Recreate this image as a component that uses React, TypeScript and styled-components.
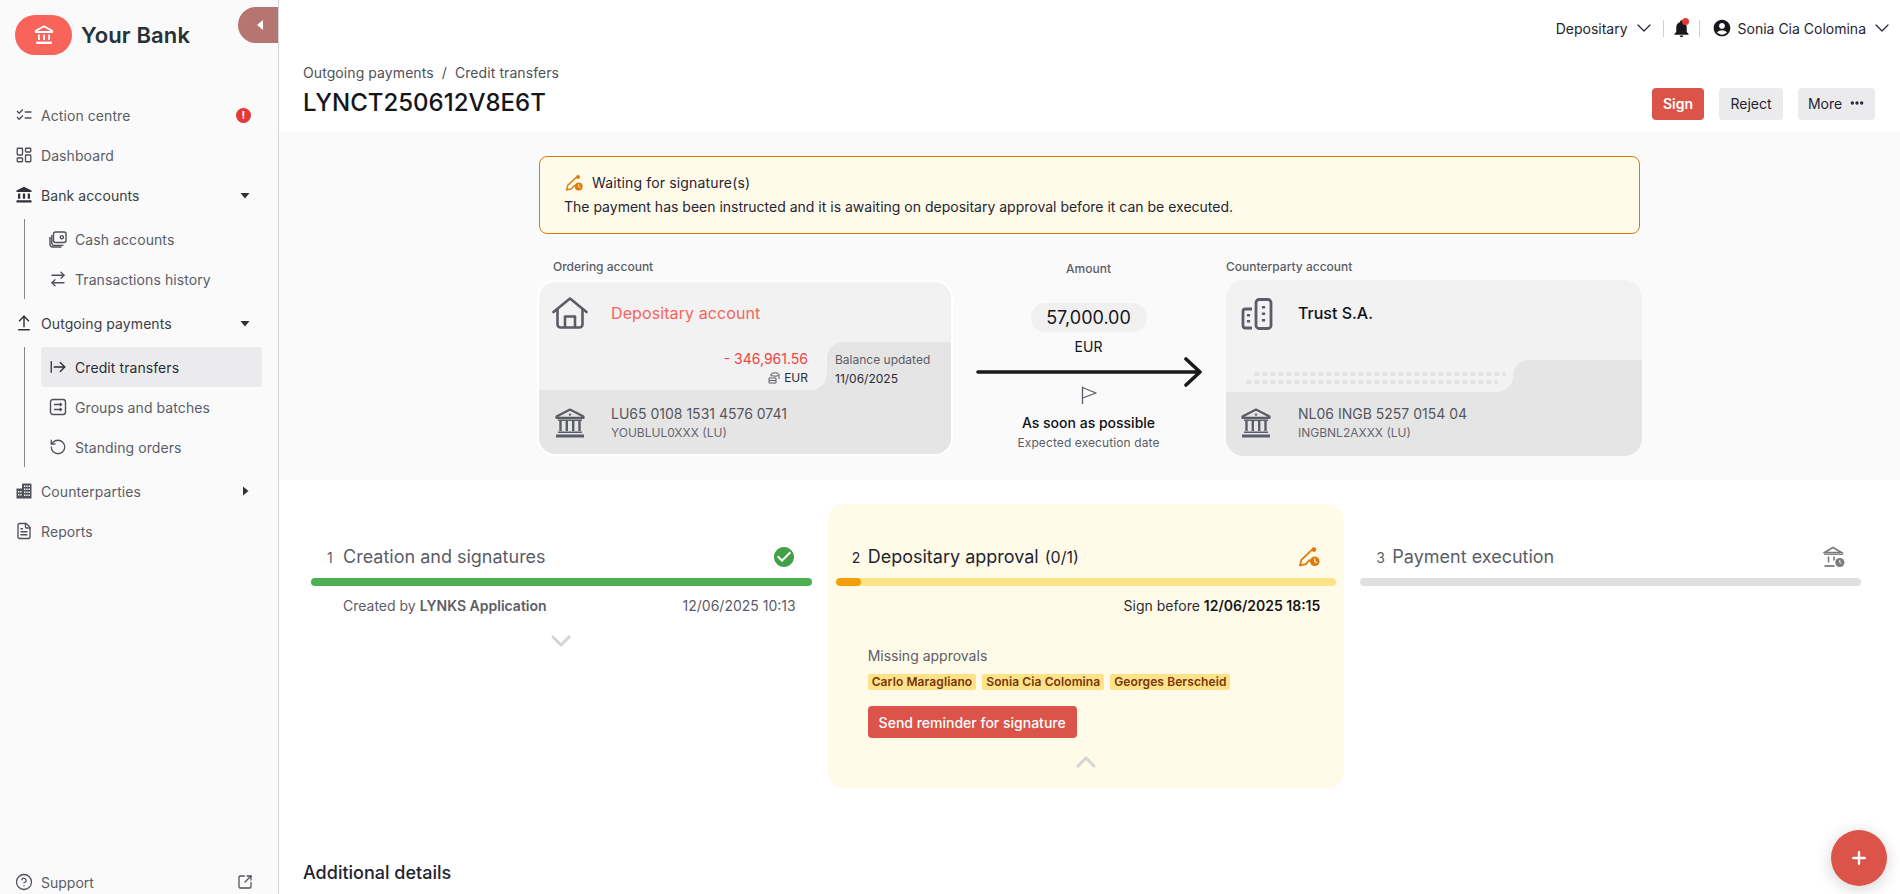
import React from 'react';
import styled, { createGlobalStyle } from 'styled-components';
import {
  ArrowRightFromLine,
  ArrowRightLeft,
  ArrowUpFromLine,
  ChevronDown,
  ChevronUp,
  CircleHelp,
  Ellipsis,
  FileText,
  LayoutDashboard,
  Plus,
  RotateCcw,
  SquareArrowOutUpRight,
} from 'lucide-react';
import {
  MdAccountBalance,
  MdAccountCircle,
  MdCheckCircle,
  MdNotifications,
  MdOutlineChecklist,
} from 'react-icons/md';

const GlobalStyle = createGlobalStyle`
  html, body {
    margin: 0;
    height: 100%;
    overflow: hidden;
    background: #fff;
    font-family: Inter, "Liberation Sans", sans-serif;
    color: #1f2430;
  }
  * { box-sizing: border-box; }
`;

const BankGlyph = ({ size = 24 }: { size?: number }) => (
  <svg width={size} height={size} viewBox="0 0 24 24" fill="none" stroke="currentColor" strokeWidth="2">
    <path d="M12 2.5 3 7.5v1.2h18V7.5z" strokeLinejoin="round" />
    <path d="M6.5 11.5v6M12 11.5v6M17.5 11.5v6" />
    <path d="M3.5 20.5h17" strokeWidth="2.6" />
  </svg>
);

const BigBankGlyph = () => (
  <svg width="30" height="30" viewBox="0 0 30 30" fill="none" stroke="#5b5d66" strokeWidth="2.2">
    <path d="M15 1.5 1.5 8.5v1.4h27V8.5z" strokeLinejoin="round" />
    <circle cx="15" cy="6.6" r="1.2" fill="#5b5d66" stroke="none" />
    <path d="M3 12.2h24" strokeWidth="1.6" />
    <path d="M5.5 13v10M11.8 13v10M18.2 13v10M24.5 13v10" strokeWidth="2.4" />
    <path d="M3 24.2h24" strokeWidth="1.6" />
    <path d="M1 28h28" strokeWidth="3" />
  </svg>
);

const HouseGlyph = () => (
  <svg width="36" height="32" viewBox="0 0 36 32" fill="none" stroke="#5b5d66" strokeWidth="2.6" strokeLinejoin="round" strokeLinecap="round">
    <path d="M1.5 15 18 1.5 34.5 15" />
    <path d="M5.5 12v15.5a3 3 0 0 0 3 3h19a3 3 0 0 0 3-3V12" />
    <path d="M13 30V19.5h10V30" />
  </svg>
);

const WalletGlyph = () => (
  <svg width="18" height="18" viewBox="0 0 18 18" fill="none" stroke="currentColor" strokeWidth="1.4">
    <rect x="4.5" y="2" width="12.5" height="10.5" rx="2" />
    <circle cx="12.8" cy="7.2" r="1.6" />
    <path d="M2.8 5v8a2.4 2.4 0 0 0 2.4 2.4h9.3" />
    <path d="M1 7v7.5A2.5 2.5 0 0 0 3.5 17h9" />
  </svg>
);

const GroupsGlyph = () => (
  <svg width="18" height="18" viewBox="-1 -1 18 18" fill="none" stroke="currentColor" strokeWidth="1.4">
    <rect x="0.5" y="0.5" width="15" height="15" rx="2.5" />
    <path d="M4 5.5h7.5M10 4l1.5 1.5L10 7M4 10.5h7.5M10 9l1.5 1.5L10 12" />
  </svg>
);

const TowersGlyph = () => (
  <svg width="18" height="18" viewBox="0 0 18 18">
    <path fill="#4f5159" d="M1.5 6.5h5.5v-4a1 1 0 0 1 1-1h7.5a1 1 0 0 1 1 1V16.5H1.5z" />
    <path fill="#fafafa" d="M9 3.5h1.4v1.6H9zM11.3 3.5h1.4v1.6h-1.4zM13.6 3.5H15v1.6h-1.4zM9 6.5h1.4v1.6H9zM11.3 6.5h1.4v1.6h-1.4zM13.6 6.5H15v1.6h-1.4zM9 9.5h1.4v1.6H9zM11.3 9.5h1.4v1.6h-1.4zM13.6 9.5H15v1.6h-1.4zM9 12.5h1.4v1.6H9zM11.3 12.5h1.4v1.6h-1.4zM13.6 12.5H15v1.6h-1.4zM3 9h1.4v1.6H3zM5.2 9h1.4v1.6H5.2zM3 12h1.4v1.6H3zM5.2 12h1.4v1.6H5.2z" />
  </svg>
);

const BuildingGlyph = () => (
  <svg width="32" height="32" viewBox="0 0 32 32" fill="none" stroke="#5b5d66" strokeWidth="2.8">
    <path d="M11 11H4.5a2.5 2.5 0 0 0-2.5 2.5v14A2.5 2.5 0 0 0 4.5 30H11" strokeLinejoin="round" />
    <rect x="15" y="1.5" width="15" height="29" rx="3" />
    <path d="M22.5 8v2.6M22.5 14.5v2.6M22.5 21v2.6M7.5 16v2.6M7.5 22v2.6" strokeWidth="3.2" />
  </svg>
);

const FlagGlyph = () => (
  <svg width="18" height="18" viewBox="0 0 18 18" fill="none" stroke="#5b5d66" strokeWidth="1.3">
    <path d="M2.5 0.5v17.5M2.5 1.5 16 7 2.5 12" strokeLinejoin="round" />
  </svg>
);

const SignGlyph = ({ size = 21 }: { size?: number }) => (
  <svg width={size} height={size} viewBox="0 0 21 21" fill="none" stroke="#df7a0c" strokeWidth="1.7" strokeLinecap="round" strokeLinejoin="round">
    <path d="M2 18.5 3 13.5 13 4" />
    <path d="M2 18.5 7.5 17.2 11 13.5" />
    <circle cx="15.2" cy="3.4" r="2.3" fill="#df7a0c" stroke="none" />
    <circle cx="16" cy="14.6" r="4.6" fill="#df7a0c" stroke="none" />
    <path d="M16 12.2v2.6l1.7 1" stroke="#fffbeb" strokeWidth="1.1" />
  </svg>
);

const BankClockGlyph = () => (
  <svg width="22" height="22" viewBox="0 0 22 22" fill="none" stroke="#7b7b7b" strokeWidth="1.6">
    <path d="M1.5 6.5 10 1.5l8.5 5z" />
    <path d="M1 8.2h19" strokeWidth="1.4" />
    <path d="M5.5 10.5v6M11 10.5v4" />
    <path d="M1.5 20h10" strokeWidth="1.8" />
    <circle cx="16.8" cy="16.5" r="4.6" fill="#7b7b7b" stroke="none" />
    <path d="M16.8 14v2.6l1.6 1" stroke="#fff" strokeWidth="1" />
  </svg>
);

const Caret = ({ right }: { right?: boolean }) => (
  <svg width="12" height="12" viewBox="0 0 12 12" fill="#2f3138">
    {right ? <path d="M4 1.5v9L9.5 6z" /> : <path d="M1.5 4h9L6 9.5z" />}
  </svg>
);

const App = () => {
  return (
    <Page>
      <GlobalStyle />
      <Sidebar>
        <CollapseTab aria-label="Collapse">
          <svg width="10" height="12" viewBox="0 0 10 12" fill="#fff">
            <path d="M8 1v10L2 6z" />
          </svg>
        </CollapseTab>
        <Brand>
          <LogoPill>
            <BankGlyph size={22} />
          </LogoPill>
          <BrandName>Your Bank</BrandName>
        </Brand>
        <Nav>
          <NavRow>
            <MdOutlineChecklist size={18} />
            <NavLabel>Action centre</NavLabel>
            <AlertDot>!</AlertDot>
          </NavRow>
          <NavRow>
            <LayoutDashboard size={18} strokeWidth={1.8} />
            <NavLabel>Dashboard</NavLabel>
          </NavRow>
          <NavRow $strong>
            <MdAccountBalance size={18} />
            <NavLabel>Bank accounts</NavLabel>
            <Caret />
          </NavRow>
          <SubList>
            <SubRow>
              <WalletGlyph />
              <span>Cash accounts</span>
            </SubRow>
            <SubRow>
              <ArrowRightLeft size={18} strokeWidth={1.7} />
              <span>Transactions history</span>
            </SubRow>
          </SubList>
          <NavRow $strong>
            <ArrowUpFromLine size={18} strokeWidth={1.9} />
            <NavLabel>Outgoing payments</NavLabel>
            <Caret />
          </NavRow>
          <SubList>
            <SubRow $active>
              <ArrowRightFromLine size={18} strokeWidth={1.7} />
              <span>Credit transfers</span>
            </SubRow>
            <SubRow>
              <GroupsGlyph />
              <span>Groups and batches</span>
            </SubRow>
            <SubRow>
              <RotateCcw size={18} strokeWidth={1.7} />
              <span>Standing orders</span>
            </SubRow>
          </SubList>
          <NavRow>
            <TowersGlyph />
            <NavLabel>Counterparties</NavLabel>
            <Caret right />
          </NavRow>
          <NavRow>
            <FileText size={18} strokeWidth={1.8} />
            <NavLabel>Reports</NavLabel>
          </NavRow>
        </Nav>
        <SupportRow>
          <CircleHelp size={18} strokeWidth={1.7} />
          <NavLabel>Support</NavLabel>
          <SquareArrowOutUpRight size={16} strokeWidth={1.9} />
        </SupportRow>
      </Sidebar>

      <Main>
        <TopBar>
          <TopItem>
            Depositary
            <ChevronDown size={24} strokeWidth={1.2} />
          </TopItem>
          <TopDivider />
          <BellWrap>
            <MdNotifications size={21} />
            <BellDot />
          </BellWrap>
          <TopDivider />
          <TopItem $pushed>
            <UserIcon>
              <MdAccountCircle size={20} />
            </UserIcon>
            Sonia Cia Colomina
            <ChevronDown size={24} strokeWidth={1.2} />
          </TopItem>
        </TopBar>

        <TitleRow>
          <div>
            <Breadcrumb>Outgoing payments&nbsp; /&nbsp; Credit transfers</Breadcrumb>
            <PageTitle>LYNCT250612V8E6T</PageTitle>
          </div>
          <Actions>
            <ActionButton $primary $width={52}>
              Sign
            </ActionButton>
            <ActionButton $width={64}>Reject</ActionButton>
            <ActionButton $width={77}>
              More
              <Ellipsis size={16} strokeWidth={3} />
            </ActionButton>
          </Actions>
        </TitleRow>

        <Band>
          <Notice>
            <NoticeTitle>
              <SignGlyph size={18} />
              Waiting for signature(s)
            </NoticeTitle>
            <div>The payment has been instructed and it is awaiting on depositary approval before it can be executed.</div>
          </Notice>

          <AccountsRow>
            <div>
              <AccountLabel $indent>Ordering account</AccountLabel>
              <AccountCard $outlined>
                <CardTop $height={60}>
                  <IconSlot>
                    <HouseGlyph />
                  </IconSlot>
                  <AccountName $accent>Depositary account</AccountName>
                </CardTop>
                <CardMiddle $height={48} $split={288}>
                  <MiddleLeft>
                    <BalanceValue>- 346,961.56</BalanceValue>
                    <BalanceCurrency>
                      <svg width="12" height="12" viewBox="0 0 12 12" fill="none" stroke="#5b5d66" strokeWidth="1">
                        <ellipse cx="7" cy="2.5" rx="4" ry="1.7" />
                        <path d="M3 2.5v2M11 2.5v4.5M1 6h7v5H1zM1 8.5h7" />
                      </svg>
                      EUR
                    </BalanceCurrency>
                  </MiddleLeft>
                  <MiddleRight>
                    <BalanceCaption>Balance updated</BalanceCaption>
                    <BalanceDate>11/06/2025</BalanceDate>
                  </MiddleRight>
                </CardMiddle>
                <CardBottom $height={64} $nudge="down">
                  <IconSlot $bank>
                    <BigBankGlyph />
                  </IconSlot>
                  <div>
                    <Iban>LU65 0108 1531 4576 0741</Iban>
                    <Bic>YOUBLUL0XXX (LU)</Bic>
                  </div>
                </CardBottom>
              </AccountCard>
            </div>

            <AmountColumn>
              <AmountLabel>Amount</AmountLabel>
              <AmountPill>57,000.00</AmountPill>
              <AmountCurrency>EUR</AmountCurrency>
              <svg width="226" height="30" viewBox="0 0 226 30" fill="none" stroke="#1a1a1a" strokeWidth="3.6" strokeLinecap="round" strokeLinejoin="round">
                <path d="M2 15h221M210 2l14 13-14 13" />
              </svg>
              <FlagSlot>
                <FlagGlyph />
              </FlagSlot>
              <Soon>As soon as possible</Soon>
              <Expected>Expected execution date</Expected>
            </AmountColumn>

            <div>
              <AccountLabel>Counterparty account</AccountLabel>
              <AccountCard>
                <CardTop $height={80} $alignTop>
                  <IconSlot $wide>
                    <BuildingGlyph />
                  </IconSlot>
                  <AccountName>Trust S.A.</AccountName>
                </CardTop>
                <CardMiddle $height={32} $split={287}>
                  <MiddleLeft $dots>
                    <DotRow $offset={28} />
                    <DotRow $offset={20} />
                  </MiddleLeft>
                  <MiddleRight />
                </CardMiddle>
                <CardBottom $height={64} $nudge="up">
                  <IconSlot $wide>
                    <BigBankGlyph />
                  </IconSlot>
                  <div>
                    <Iban>NL06 INGB 5257 0154 04</Iban>
                    <Bic>INGBNL2AXXX (LU)</Bic>
                  </div>
                </CardBottom>
              </AccountCard>
            </div>
          </AccountsRow>
        </Band>

        <Steps>
          <Step>
            <StepHead>
              <StepNumber>1</StepNumber>
              <StepTitle>Creation and signatures</StepTitle>
              <MdCheckCircle size={24} color="#43a047" />
            </StepHead>
            <Track $color="#4caf50" />
            <StepMeta>
              <span>
                Created by <b>LYNKS Application</b>
              </span>
              <span>12/06/2025 10:13</span>
            </StepMeta>
            <Toggle>
              <ChevronDown size={32} strokeWidth={2.3} />
            </Toggle>
          </Step>

          <Step $current>
            <StepHead>
              <StepNumber $dark>2</StepNumber>
              <StepTitle $dark>
                Depositary approval<Counter>(0/1)</Counter>
              </StepTitle>
              <SignGlyph size={22} />
            </StepHead>
            <Track $color="#fde288">
              <TrackFill />
            </Track>
            <DeadlineRow>
              <span>
                Sign before <b>12/06/2025 18:15</b>
              </span>
            </DeadlineRow>
            <Missing>
              <MissingLabel>Missing approvals</MissingLabel>
              <Badges>
                <Badge>Carlo Maragliano</Badge>
                <Badge>Sonia Cia Colomina</Badge>
                <Badge>Georges Berscheid</Badge>
              </Badges>
              <ReminderButton>Send reminder for signature</ReminderButton>
            </Missing>
            <Toggle $closing>
              <ChevronUp size={32} strokeWidth={2.3} />
            </Toggle>
          </Step>

          <Step>
            <StepHead>
              <StepNumber>3</StepNumber>
              <StepTitle>Payment execution</StepTitle>
              <BankClockGlyph />
            </StepHead>
            <Track $color="#e0e0e0" />
          </Step>
        </Steps>

        <SectionTitle>Additional details</SectionTitle>
      </Main>

      <Fab aria-label="Add">
        <Plus size={20} strokeWidth={2.8} />
      </Fab>
    </Page>
  );
};

export default App;

const Page = styled.div`
  display: flex;
  height: 100vh;
  overflow: hidden;
`;

const Sidebar = styled.aside`
  position: relative;
  flex: 0 0 279px;
  display: flex;
  flex-direction: column;
  background-color: #fafafa;
  border-right: 1px solid #d4d4d4;
  overflow: hidden;
`;

const CollapseTab = styled.button`
  position: absolute;
  top: 7px;
  right: 0;
  width: 40px;
  height: 36px;
  padding: 0 0 0 4px;
  display: flex;
  align-items: center;
  justify-content: center;
  border: none;
  border-radius: 18px 0 0 18px;
  background-color: #b57570;
`;

const Brand = styled.div`
  display: flex;
  align-items: center;
  gap: 9px;
  padding: 15px 0 0 15px;
  margin-bottom: 40px;
`;

const LogoPill = styled.div`
  width: 57px;
  height: 40px;
  display: flex;
  align-items: center;
  justify-content: center;
  border-radius: 20px;
  background-color: #f8635a;
  color: #fff;
`;

const BrandName = styled.div`
  font-size: 22px;
  font-weight: 600;
  letter-spacing: 0.15px;
  color: #263238;
`;

const Nav = styled.nav`
  display: flex;
  flex-direction: column;
  letter-spacing: 0.08px;
`;

const NavRow = styled.div<{ $strong?: boolean }>`
  height: 40px;
  display: flex;
  align-items: center;
  gap: 8px;
  padding: 0 27px 0 15px;
  font-size: 14px;
  color: ${(p) => (p.$strong ? '#3c3d45' : '#5b5d66')};
  svg {
    flex: none;
    color: ${(p) => (p.$strong ? '#2f3138' : '#4f5159')};
  }
`;

const NavLabel = styled.span`
  flex: 1;
`;

const AlertDot = styled.span`
  width: 15px;
  height: 15px;
  display: flex;
  align-items: center;
  justify-content: center;
  border-radius: 50%;
  background-color: #e53935;
  color: #fff;
  font-size: 11px;
  font-weight: 700;
`;

const SubList = styled.div`
  display: flex;
  flex-direction: column;
  margin: 4px 16px 4px 24px;
  padding-left: 16px;
  border-left: 1px solid #85868c;
`;

const SubRow = styled.div<{ $active?: boolean }>`
  height: 40px;
  display: flex;
  align-items: center;
  gap: 8px;
  padding-left: 8px;
  border-radius: 4px;
  font-size: 14px;
  color: ${(p) => (p.$active ? '#2b2d34' : '#5b5d66')};
  background-color: ${(p) => (p.$active ? '#ebebed' : 'transparent')};
  svg {
    flex: none;
    color: ${(p) => (p.$active ? '#2b2d34' : '#4f5159')};
  }
`;

const SupportRow = styled(NavRow)`
  height: 24px;
  margin-top: auto;
  padding-right: 25px;
  flex: none;
`;

const Main = styled.main`
  flex: 1;
  min-width: 0;
  overflow: hidden;
`;

const TopBar = styled.header`
  height: 56px;
  display: flex;
  align-items: center;
  justify-content: flex-end;
  gap: 7px;
  padding-right: 6px;
  font-size: 14px;
`;

const TopItem = styled.div<{ $pushed?: boolean }>`
  display: flex;
  align-items: center;
  gap: 4px;
  margin-left: ${(p) => (p.$pushed ? 5 : 0)}px;
  color: #1f2430;
`;

const UserIcon = styled.span`
  display: flex;
  margin-right: 2px;
  color: #16181d;
`;

const TopDivider = styled.div`
  width: 1px;
  height: 17px;
  background-color: #d0d0d0;
`;

const BellWrap = styled.div`
  position: relative;
  display: flex;
  color: #16181d;
`;

const BellDot = styled.span`
  position: absolute;
  top: 0;
  right: 3px;
  width: 7px;
  height: 7px;
  border-radius: 50%;
  background-color: #e53935;
`;

const TitleRow = styled.div`
  height: 76px;
  display: flex;
  justify-content: space-between;
  padding: 7px 25px 0 24px;
`;

const Breadcrumb = styled.div`
  font-size: 14px;
  line-height: 20px;
  letter-spacing: 0.08px;
  color: #4f5159;
`;

const PageTitle = styled.h1`
  margin: 3px 0 0;
  font-size: 24px;
  line-height: 34px;
  font-weight: 500;
  color: #14161b;
`;

const Actions = styled.div`
  display: flex;
  gap: 15px;
  padding-top: 25px;
`;

const ActionButton = styled.button<{ $primary?: boolean; $width: number }>`
  width: ${(p) => p.$width}px;
  height: 32px;
  display: flex;
  align-items: center;
  justify-content: center;
  gap: 7px;
  padding: 0 0 2px;
  border: none;
  border-radius: 4px;
  font-family: inherit;
  font-size: 14px;
  font-weight: ${(p) => (p.$primary ? 600 : 400)};
  color: ${(p) => (p.$primary ? '#fff' : '#1f2430')};
  background-color: ${(p) => (p.$primary ? '#dc5349' : '#ebebed')};
`;

const Band = styled.section`
  height: 348px;
  padding-top: 24px;
  background-color: #fafafa;
`;

const Notice = styled.div`
  width: 1101px;
  margin: 0 auto;
  padding: 16px 24px;
  border: 1px solid #dd7a0e;
  border-radius: 8px;
  background-color: #fffbeb;
  font-size: 14px;
  line-height: 20px;
  color: #1f2430;
`;

const NoticeTitle = styled.div`
  display: flex;
  align-items: center;
  gap: 9px;
  margin: 0 0 4px 1px;
  letter-spacing: 0.15px;
`;

const AccountsRow = styled.div`
  width: 1103px;
  margin: 25px 0 0 260px;
  display: grid;
  grid-template-columns: 412px 1fr 416px;
`;

const AccountLabel = styled.div<{ $indent?: boolean }>`
  height: 16px;
  margin-bottom: 5px;
  padding-left: ${(p) => (p.$indent ? 14 : 0)}px;
  font-size: 12px;
  line-height: 16px;
  font-weight: 500;
  color: #5b5d66;
`;

const AccountCard = styled.div<{ $outlined?: boolean }>`
  display: flex;
  flex-direction: column;
  overflow: hidden;
  border-radius: 18px;
  margin: ${(p) => (p.$outlined ? '0 -2px' : '0')};
  border: ${(p) => (p.$outlined ? '2px solid #fff' : 'none')};
  background-color: #f2f2f2;
`;

const CardTop = styled.div<{ $height: number; $alignTop?: boolean }>`
  height: ${(p) => p.$height}px;
  display: flex;
  align-items: flex-start;
  padding-top: ${(p) => (p.$alignTop ? 18 : 15)}px;
`;

const IconSlot = styled.div<{ $wide?: boolean; $bank?: boolean }>`
  flex: none;
  width: 72px;
  padding-left: ${(p) => (p.$wide ? 15 : p.$bank ? 16 : 13)}px;
  display: flex;
`;

const AccountName = styled.div<{ $accent?: boolean }>`
  padding-top: ${(p) => (p.$accent ? 6 : 5)}px;
  font-size: 16px;
  line-height: 20px;
  letter-spacing: ${(p) => (p.$accent ? 0.1 : 0)}px;
  font-weight: ${(p) => (p.$accent ? 400 : 500)};
  color: ${(p) => (p.$accent ? '#f8635a' : '#0f1115')};
`;

const CardMiddle = styled.div<{ $height: number; $split: number }>`
  height: ${(p) => p.$height}px;
  display: grid;
  grid-template-columns: ${(p) => p.$split}px 1fr;
  background: linear-gradient(90deg, #e5e5e5 0 ${(p) => p.$split}px, #f2f2f2 ${(p) => p.$split}px);
`;

const MiddleLeft = styled.div<{ $dots?: boolean }>`
  display: flex;
  flex-direction: column;
  align-items: ${(p) => (p.$dots ? 'flex-start' : 'flex-end')};
  gap: ${(p) => (p.$dots ? 4 : 0)}px;
  padding: ${(p) => (p.$dots ? '12px 0 0' : '0 19px 0 0')};
  background-color: #f2f2f2;
  border-bottom-right-radius: 16px;
`;

const MiddleRight = styled.div`
  padding: 8px 0 0 8px;
  background-color: #e5e5e5;
  border-top-left-radius: 16px;
`;

const DotRow = styled.div<{ $offset: number }>`
  width: 252px;
  height: 4px;
  margin-left: ${(p) => p.$offset}px;
  background-image: repeating-linear-gradient(90deg, #e3e3e3 0 5px, transparent 5px 8px);
`;

const BalanceValue = styled.div`
  font-size: 14px;
  line-height: 20px;
  margin-top: 7px;
  color: #ef4444;
`;

const BalanceCurrency = styled.div`
  display: flex;
  align-items: center;
  gap: 4px;
  font-size: 12px;
  line-height: 18px;
  color: #2b2d34;
`;

const BalanceCaption = styled.div`
  font-size: 12px;
  line-height: 18px;
  margin-top: 1px;
  color: #5b5d66;
`;

const BalanceDate = styled.div`
  font-size: 12px;
  line-height: 20px;
  color: #2b2d34;
`;

const CardBottom = styled.div<{ $height: number; $nudge: 'up' | 'down' }>`
  height: ${(p) => p.$height}px;
  display: flex;
  align-items: center;
  padding: ${(p) => (p.$nudge === 'down' ? '2px 0 0' : '0 0 2px')};
  background-color: #e5e5e5;
`;

const Iban = styled.div`
  font-size: 14px;
  line-height: 20px;
  color: #55565e;
`;

const Bic = styled.div`
  font-size: 12px;
  line-height: 18px;
  color: #66676e;
`;

const AmountColumn = styled.div`
  margin-top: 2px;
  display: flex;
  flex-direction: column;
  align-items: center;
`;

const AmountLabel = styled.div`
  font-size: 12px;
  line-height: 16px;
  font-weight: 500;
  color: #5b5d66;
`;

const AmountPill = styled.div`
  width: 116px;
  height: 29px;
  margin-top: 26px;
  display: flex;
  align-items: center;
  justify-content: center;
  border-radius: 15px;
  background-color: #f0f0f0;
  font-size: 18px;
  color: #14161b;
`;

const AmountCurrency = styled.div`
  margin-top: 5px;
  font-size: 14px;
  line-height: 20px;
  color: #14161b;
`;

const FlagSlot = styled.div`
  display: flex;
  margin-top: -1px;
`;

const Soon = styled.div`
  margin-top: 9px;
  font-size: 14px;
  line-height: 20px;
  font-weight: 500;
  color: #0f1115;
`;

const Expected = styled.div`
  margin-top: 2px;
  font-size: 12px;
  line-height: 16px;
  letter-spacing: 0.1px;
  color: #5b5d66;
`;

const Steps = styled.section`
  display: grid;
  grid-template-columns: repeat(3, 1fr);
  align-items: start;
  gap: 8px;
  padding: 24px 31px 0 24px;
`;

const Step = styled.div<{ $current?: boolean }>`
  padding: 40px 8px ${(p) => (p.$current ? 21 : 0)}px;
  border-radius: 16px;
  background-color: ${(p) => (p.$current ? '#fffbe8' : 'transparent')};
`;

const StepHead = styled.div`
  height: 26px;
  display: flex;
  align-items: center;
  padding: 0 16px;
`;

const StepNumber = styled.span<{ $dark?: boolean }>`
  flex: none;
  width: 16px;
  font-size: 14px;
  color: ${(p) => (p.$dark ? '#1f2430' : '#5b5d66')};
`;

const StepTitle = styled.span<{ $dark?: boolean }>`
  flex: 1;
  padding-bottom: 2px;
  font-size: 18px;
  color: ${(p) => (p.$dark ? '#1f2430' : '#5b5d66')};
`;

const Counter = styled.span`
  margin-left: 6px;
  font-size: 16px;
`;

const Track = styled.div<{ $color: string }>`
  height: 8px;
  margin-top: 8px;
  border-radius: 4px;
  overflow: hidden;
  background-color: ${(p) => p.$color};
`;

const TrackFill = styled.div`
  width: 25px;
  height: 100%;
  border-radius: 4px;
  background-color: #f59e0b;
`;

const StepMeta = styled.div`
  margin-top: 10px;
  padding: 0 16px 0 32px;
  display: flex;
  justify-content: space-between;
  font-size: 14px;
  line-height: 20px;
  color: #5b5d66;
  b {
    font-weight: 600;
  }
`;

const DeadlineRow = styled.div`
  margin-top: 10px;
  padding-right: 16px;
  display: flex;
  justify-content: flex-end;
  font-size: 14px;
  line-height: 20px;
  color: #2b2d34;
  b {
    font-weight: 600;
    color: #14161b;
  }
`;

const Missing = styled.div`
  margin-top: 30px;
  padding-left: 32px;
`;

const MissingLabel = styled.div`
  font-size: 14px;
  line-height: 20px;
  color: #5b5d66;
`;

const Badges = styled.div`
  display: flex;
  gap: 6px;
  margin-top: 8px;
`;

const Badge = styled.span`
  height: 16px;
  padding: 0 4px;
  border-radius: 2px;
  background-color: #fde288;
  font-size: 12px;
  line-height: 16px;
  font-weight: 600;
  letter-spacing: 0.1px;
  color: #78350f;
`;

const ReminderButton = styled.button`
  width: 209px;
  height: 32px;
  margin-top: 16px;
  border: none;
  border-radius: 4px;
  background-color: #dc5349;
  font-family: inherit;
  font-size: 14px;
  font-weight: 500;
  color: #fff;
`;

const Toggle = styled.div<{ $closing?: boolean }>`
  display: flex;
  align-items: center;
  justify-content: center;
  height: 10px;
  margin-top: ${(p) => (p.$closing ? 19 : 20)}px;
  color: #d4d4d4;
  svg {
    flex: none;
  }
`;

const SectionTitle = styled.h2`
  margin: 73px 0 0 24px;
  font-size: 18px;
  line-height: 24px;
  font-weight: 500;
  color: #1f2430;
`;

const Fab = styled.button`
  position: fixed;
  right: 13px;
  bottom: 8px;
  width: 56px;
  height: 56px;
  display: flex;
  align-items: center;
  justify-content: center;
  border: none;
  border-radius: 50%;
  background-color: #dc5349;
  color: #fff;
  box-shadow: 0 3px 16px rgba(0, 0, 0, 0.18);
`;
